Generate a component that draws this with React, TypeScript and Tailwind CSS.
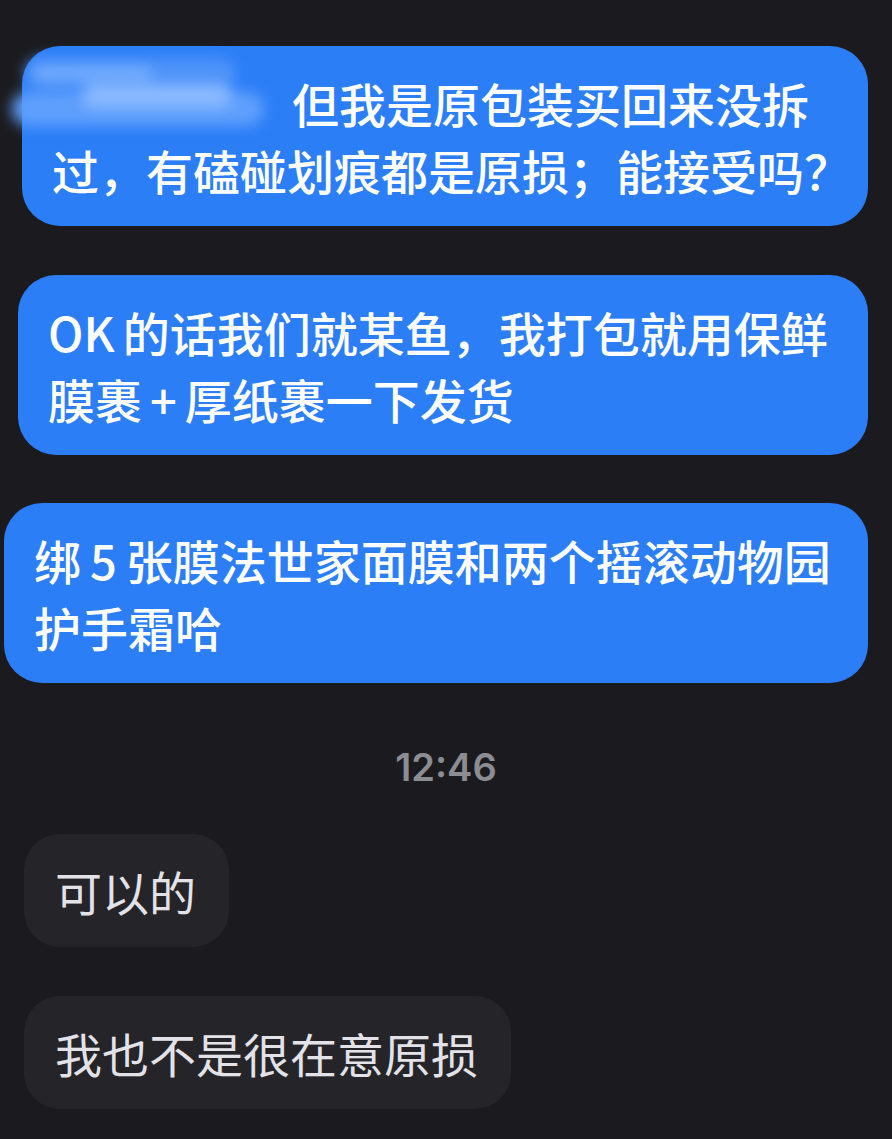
const CJK = "font-['Noto_Sans_CJK_SC','Noto_Sans',sans-serif]";

function Gap({ w = "w-[12px]" }: { w?: string }) {
  return <span className={`inline-block ${w}`} />;
}

function Outgoing({ className, children }: { className: string; children: React.ReactNode }) {
  return (
    <div
      className={`relative rounded-[38px] bg-[#2c7ef7] py-[23px] pl-[30px] text-[47px] leading-[67px] font-medium whitespace-nowrap text-white ${className}`}
    >
      {children}
    </div>
  );
}

function Incoming({ className, children }: { className: string; children: React.ReactNode }) {
  return (
    <div
      className={`self-start rounded-[36px] bg-[#252529] py-[23px] pr-[33px] pl-[31px] text-[47px] leading-[67px] whitespace-nowrap text-[#e2e2e8] ${className}`}
    >
      {children}
    </div>
  );
}

// smudged-out sender name lying over the start of the first message
function Redacted() {
  return (
    <div className="absolute top-[8px] -left-[10px] h-[72px] w-[262px] blur-[7px]">
      <div className="mt-[4px] ml-[14px] h-[30px] w-[210px] rounded-full bg-[#4f93f9]" />
      <div className="mt-[4px] h-[34px] w-[252px] rounded-full bg-[#5f9ffc]" />
      <div className="absolute top-[30px] left-[70px] h-[24px] w-[150px] rounded-full bg-[#8ab9ff]" />
      <div className="absolute top-[12px] left-[20px] h-[14px] w-[120px] rounded-full bg-[#75adfd]" />
    </div>
  );
}

export default function App() {
  return (
    <div className={`flex min-h-[1139px] w-[892px] flex-col overflow-hidden bg-[#1b1b1f] ${CJK}`}>
      <Outgoing className="mt-[46px] ml-[22px] w-[846px]">
        <Redacted />
        <Gap w="w-[240px]" />
        但我是原包装买回来没拆
        <br />
        过，有磕碰划痕都是原损；能接受吗？
      </Outgoing>

      <Outgoing className="mt-[49px] ml-[18px] w-[850px]">
        OK
        <Gap w="w-[8px]" />
        的话我们就某鱼，我打包就用保鲜
        <br />
        膜裹
        <Gap w="w-[8px]" />+<Gap w="w-[8px]" />
        厚纸裹一下发货
      </Outgoing>

      <Outgoing className="mt-[48px] ml-[4px] w-[864px]">
        绑<Gap w="w-[9px]" />5<Gap w="w-[9px]" />张膜法世家面膜和两个摇滚动物园
        <br />
        护手霜哈
      </Outgoing>

      <div className="mt-[64px] text-center font-['Inter',sans-serif] text-[38px] leading-[40px] font-semibold text-[#8c8c93]">
        12:46
      </div>

      <Incoming className="mt-[47px] ml-[24px]">可以的</Incoming>

      <Incoming className="mt-[49px] ml-[24px]">我也不是很在意原损</Incoming>
    </div>
  );
}
